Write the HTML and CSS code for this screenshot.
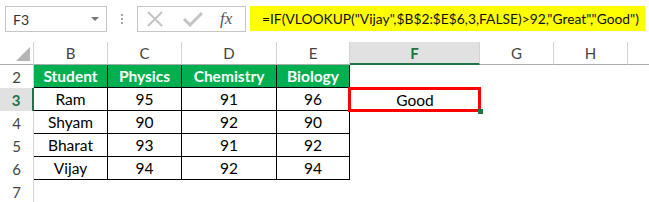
FILE: index.html
```html
<!DOCTYPE html>
<html>
<head>
<meta charset="utf-8">
<link rel="stylesheet" href="styles.css">
</head>
<body>
<div class="toolbar">
  <div class="namebox"><span class="nb-text">F3</span><span class="nb-arrow"></span></div>
  <div class="dots"><i></i><i></i><i></i></div>
  <div class="fbtns">
    <svg class="ico-x" width="18" height="16" viewBox="0 0 18 16"><path d="M2 1 L16 15 M16 1 L2 15" stroke="#c3c3c3" stroke-width="2" fill="none"/></svg>
    <svg class="ico-check" width="20" height="16" viewBox="0 0 20 16"><path d="M1 8 L7 14 L19 2" stroke="#c3c3c3" stroke-width="3" fill="none"/></svg>
    <span class="fx">fx</span>
  </div>
  <div class="formula">=IF(VLOOKUP("Vijay",$B$2:$E$6,3,FALSE)&gt;92,"Great","Good")</div>
</div>
<div class="sheet">
  <div class="ch corner"><span class="tri"></span></div>
  <div class="ch">B</div><div class="ch">C</div><div class="ch">D</div><div class="ch">E</div>
  <div class="ch sel">F</div><div class="ch">G</div><div class="ch">H</div><div class="ch last"></div>

  <div class="rh">2</div>
  <div class="c hd">Student</div><div class="c hd">Physics</div><div class="c hd">Chemistry</div><div class="c hd">Biology</div>
  <div class="e"></div><div class="e"></div><div class="e"></div><div class="e"></div>

  <div class="rh rsel">3</div>
  <div class="c">Ram</div><div class="c">95</div><div class="c">91</div><div class="c">96</div>
  <div class="e active"><span>Good</span></div><div class="e"></div><div class="e"></div><div class="e"></div>

  <div class="rh">4</div>
  <div class="c">Shyam</div><div class="c">90</div><div class="c">92</div><div class="c">90</div>
  <div class="e"></div><div class="e"></div><div class="e"></div><div class="e"></div>

  <div class="rh">5</div>
  <div class="c">Bharat</div><div class="c">93</div><div class="c">91</div><div class="c">92</div>
  <div class="e"></div><div class="e"></div><div class="e"></div><div class="e"></div>

  <div class="rh">6</div>
  <div class="c">Vijay</div><div class="c">94</div><div class="c">92</div><div class="c">94</div>
  <div class="e"></div><div class="e"></div><div class="e"></div><div class="e"></div>

  <div class="rh">7</div>
  <div class="e"></div><div class="e"></div><div class="e"></div><div class="e"></div>
  <div class="e"></div><div class="e"></div><div class="e"></div><div class="e"></div>
</div>
</body>
</html>
```
FILE: styles.css
```css
* { box-sizing: border-box; }
body {
  margin: 0;
  background: #fff;
  font-family: "Lato", "Liberation Sans", sans-serif;
  color: #000;
  width: 649px;
  height: 202px;
  overflow: hidden;
}
.toolbar {
  height: 42px;
  display: flex;
  align-items: flex-start;
  padding: 6px 0 0 5px;
}
.namebox {
  width: 102px;
  height: 26px;
  border: 1px solid #c6c6c6;
  display: flex;
  align-items: center;
  justify-content: space-between;
  padding: 0 7px 0 7px;
  font-size: 14px;
  color: #333;
}
.nb-arrow {
  width: 0; height: 0;
  border-left: 4px solid transparent;
  border-right: 4px solid transparent;
  border-top: 4px solid #777;
}
.dots {
  width: 30px;
  height: 26px;
  display: flex;
  flex-direction: column;
  align-items: center;
  justify-content: center;
  gap: 2px;
}
.dots i { display: block; width: 2px; height: 2px; background: #a6a6a6; }
.fbtns {
  width: 109px;
  height: 26px;
  border: 1px solid #c6c6c6;
  display: flex;
  align-items: center;
  padding-left: 8px;
}
.ico-x { margin-right: 19px; }
.ico-check { margin-right: 17px; }
.fx {
  font-family: "Liberation Serif", serif;
  font-style: italic;
  font-size: 17px;
  color: #555;
}
.formula {
  margin-left: 4px;
  width: 395px;
  height: 25px;
  background: #ffff00;
  font-size: 13.8px;
  color: #111;
  display: flex;
  align-items: center;
  padding-left: 12px;
  white-space: nowrap;
}
.sheet {
  display: grid;
  grid-template-columns: 34px 74px 74px 95px 73px 130px 74px 74px 1fr;
  grid-auto-rows: 23px;
  font-size: 15.5px;
}
.ch {
  border-right: 1px solid #d4d4d4;
  border-bottom: 1px solid #ababab;
  display: flex;
  align-items: center;
  justify-content: center;
  color: #444;
  font-size: 15px;
}
.ch.last { border-right: none; }
.ch.corner { position: relative; border-right: 1px solid #d4d4d4; border-bottom: 1px solid #ababab; }
.tri {
  position: absolute;
  right: 3px;
  bottom: 3px;
  width: 0; height: 0;
  border-left: 14px solid transparent;
  border-bottom: 14px solid #b5b5b5;
}
.ch.sel {
  background: #e1e1e1;
  border-bottom: 2px solid #217346;
  color: #217346;
  font-weight: bold;
}
.rh {
  border-right: 1px solid #d4d4d4;
  display: flex;
  align-items: center;
  justify-content: center;
  color: #444;
  font-size: 15px;
}
.rh.rsel {
  background: #e1e1e1;
  border-right: 2px solid #217346;
  color: #217346;
  font-weight: bold;
}
.c {
  border-right: 1px solid #000;
  border-bottom: 1px solid #000;
  display: flex;
  align-items: center;
  justify-content: center;
}
.c.hd {
  background: #00b050;
  color: #fff;
  font-weight: bold;
}
.e {
  display: flex;
  align-items: center;
  justify-content: center;
}
.e.active { position: relative; }
.e.active::after {
  content: "";
  position: absolute;
  left: -2px; top: -1px; right: -1px; bottom: -1px;
  border: 3px solid #ff0000;
}
.e.active::before {
  content: "";
  position: absolute;
  right: -3px; bottom: -3px;
  width: 5px; height: 5px;
  background: #217346;
  z-index: 2;
}
```
